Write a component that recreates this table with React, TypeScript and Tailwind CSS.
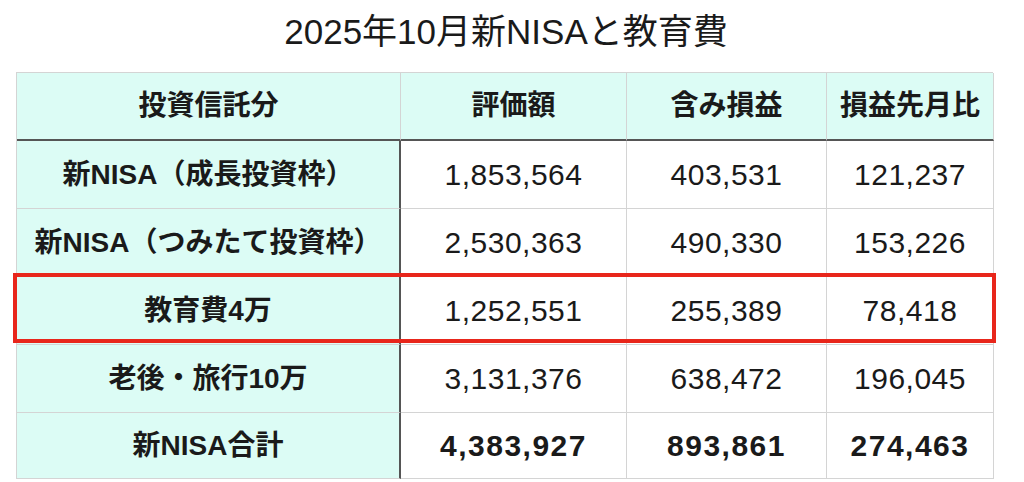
const rows = [
  { label: "新NISA（成長投資枠）", values: ["1,853,564", "403,531", "121,237"] },
  { label: "新NISA（つみたて投資枠）", values: ["2,530,363", "490,330", "153,226"] },
  { label: "教育費4万", values: ["1,252,551", "255,389", "78,418"] },
  { label: "老後・旅行10万", values: ["3,131,376", "638,472", "196,045"] },
  { label: "新NISA合計", values: ["4,383,927", "893,861", "274,463"], total: true },
];

const headers = ["評価額", "含み損益", "損益先月比"];

export default function App() {
  return (
    <div
      className="w-[1024px] h-[482px] bg-white text-[#1a1a1a] overflow-hidden"
      style={{ fontFamily: '"Liberation Sans", "Noto Sans CJK JP", sans-serif' }}
    >
      <h1 className="h-[72px] pt-[9px] pr-[12px] text-center text-[35px] leading-[46px] font-normal">
        2025年10月新NISAと教育費
      </h1>

      <div className="relative ml-[16px] w-[977px]">
        <div className="grid grid-cols-[384px_226px_200px_167px] border-t border-l border-[#d4d4d4]">
          <div className="h-[68px] flex items-center justify-center bg-[#dcfcf5] border-r border-[#d4d4d4] border-b-2 border-b-[#555] text-[28px] font-bold">
            投資信託分
          </div>
          {headers.map((h) => (
            <div
              key={h}
              className="h-[68px] flex items-center justify-center bg-[#dcfcf5] border-r border-[#d4d4d4] border-b-2 border-b-[#555] text-[28px] font-bold"
            >
              {h}
            </div>
          ))}

          {rows.map((r, i) => (
            <Row key={i} {...r} last={i === rows.length - 1} />
          ))}
        </div>

        {/* red highlight around 教育費 row */}
        <div className="absolute left-[-3px] top-[201px] w-[983px] h-[70px] border-[4px] border-[#e8261b] pointer-events-none" />
      </div>
    </div>
  );
}

function Row({
  label,
  values,
  total,
  last,
}: {
  label: string;
  values: string[];
  total?: boolean;
  last?: boolean;
}) {
  const h = last ? "h-[66px]" : "h-[68px]";
  return (
    <>
      <div
        className={`${h} flex items-center justify-center bg-[#dcfcf5] border-r-2 border-r-[#555] border-b border-[#d4d4d4] text-[28px] font-bold`}
      >
        {label}
      </div>
      {values.map((v, j) => (
        <div
          key={j}
          className={`${h} flex items-center justify-center border-r border-b border-[#d4d4d4] text-[30px] ${
            total ? "font-bold tracking-[1.5px]" : "font-normal tracking-[0.5px]"
          }`}
        >
          {v}
        </div>
      ))}
    </>
  );
}
